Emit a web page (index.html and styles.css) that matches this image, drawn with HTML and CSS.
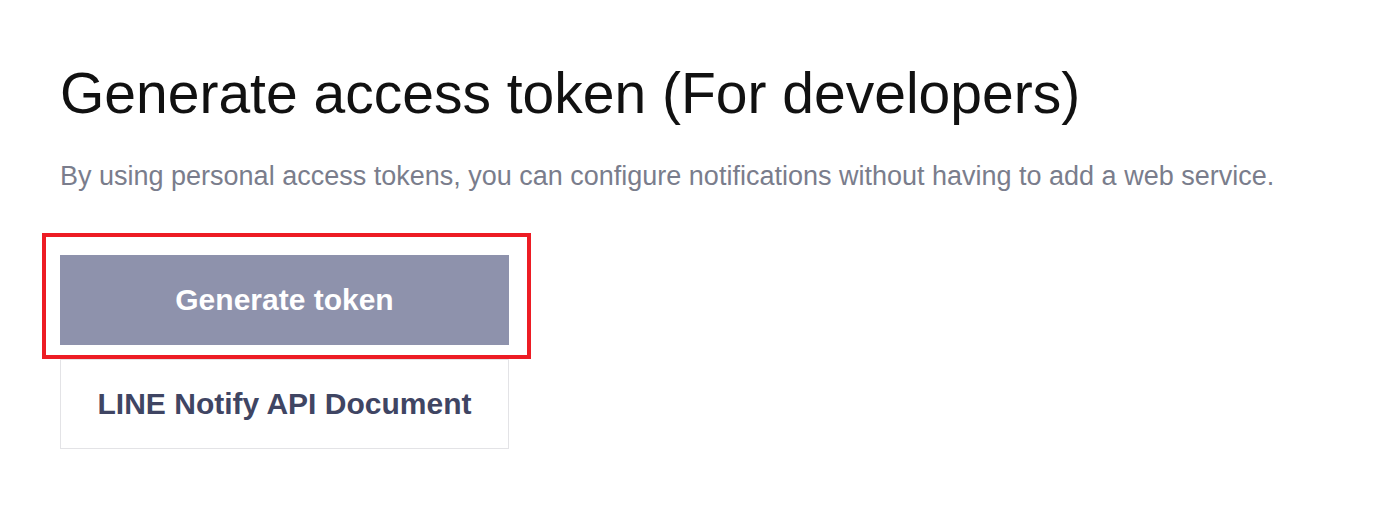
FILE: index.html
```html
<!DOCTYPE html>
<html>
<head>
<meta charset="utf-8">
<link rel="stylesheet" href="styles.css">
</head>
<body>
<main class="page">
  <h1 class="title">Generate access token (For developers)</h1>
  <p class="desc">By using personal access tokens, you can configure notifications without having to add a web service.</p>
  <div class="actions">
    <div class="highlight-wrap">
      <button class="btn btn-primary">Generate token</button>
      <span class="highlight"></span>
    </div>
    <a class="btn btn-secondary">LINE Notify API Document</a>
  </div>
</main>
</body>
</html>
```
FILE: styles.css
```css
html, body {
  margin: 0;
  padding: 0;
  background: #fff;
}
body {
  font-family: "Liberation Sans", Arial, sans-serif;
}
.page {
  padding: 53px 60px 0 60px;
}
.title {
  margin: 0;
  font-size: 57px;
  font-weight: normal;
  line-height: 80px;
  color: #111;
}
.desc {
  margin: 27px 0 0 0;
  font-size: 27px;
  line-height: 32px;
  color: #7a7d8c;
}
.actions {
  margin-top: 63px;
  width: 449px;
  display: flex;
  flex-direction: column;
  gap: 14px;
}
.highlight-wrap {
  position: relative;
}
.btn {
  box-sizing: border-box;
  display: flex;
  align-items: center;
  justify-content: center;
  width: 449px;
  height: 90px;
  font-family: "Liberation Sans", Arial, sans-serif;
  font-size: 30px;
  font-weight: bold;
  border: 0;
  padding: 0;
}
.btn-primary {
  background: #8e92ac;
  color: #fff;
}
.btn-secondary {
  background: #fff;
  border: 1px solid #e3e3e6;
  color: #3f4563;
}
.highlight {
  position: absolute;
  top: -22px;
  left: -18px;
  right: -22px;
  bottom: -14px;
  border: 4px solid #ed1c24;
  pointer-events: none;
}
```
